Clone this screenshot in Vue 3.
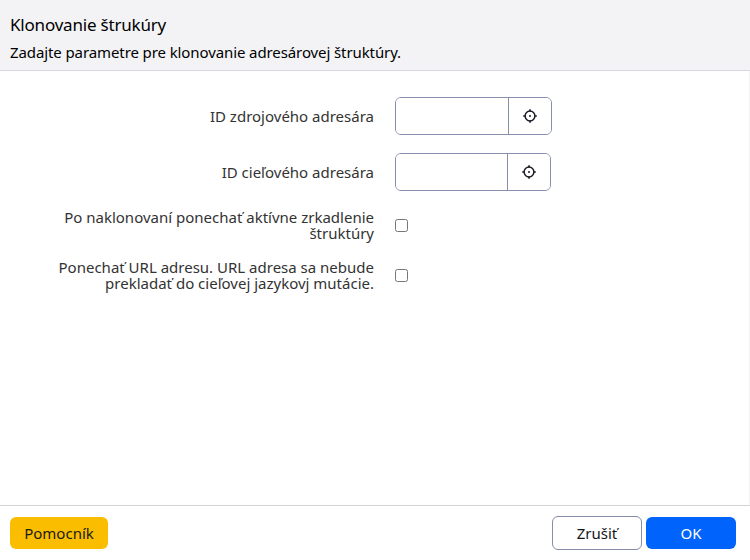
<script setup>
const fields = [
  { label: 'ID zdrojového adresára', cls: 'source' },
  { label: 'ID cieľového adresára', cls: 'target' },
]
const options = [
  { cls: 'mirror', lines: ['Po naklonovaní ponechať aktívne zrkadlenie', 'štruktúry'] },
  { cls: 'url', lines: ['Ponechať URL adresu. URL adresa sa nebude', 'prekladať do cieľovej jazykovj mutácie.'] },
]
</script>

<template>
  <div class="dialog">
    <header class="head">
      <h1><span>Klonovanie štrukúry</span></h1>
      <p><span>Zadajte parametre pre klonovanie adresárovej štruktúry.</span></p>
    </header>
    <main class="body">
      <div v-for="f in fields" :key="f.cls" class="row field" :class="f.cls">
        <label class="label"><span>{{ f.label }}</span></label>
        <div class="group">
          <input type="text" class="input" />
          <button class="pick" type="button">
            <svg width="14" height="14" viewBox="0 0 14 14" fill="none" stroke="#1e1f29">
              <circle cx="7" cy="7" r="4.9" stroke-width="1.5" />
              <path d="M7 .2v2.6M7 11.2v2.6M.2 7h2.6M11.2 7h2.6" stroke-width="1.6" />
              <circle cx="7" cy="7" r="1" fill="#1e1f29" stroke="none" />
            </svg>
          </button>
        </div>
      </div>
      <div v-for="o in options" :key="o.cls" class="row option" :class="o.cls">
        <label class="label"><span v-for="l in o.lines" :key="l" class="line">{{ l }}</span></label>
        <input type="checkbox" class="check" />
      </div>
    </main>
    <footer class="foot">
      <button class="btn help" type="button">Pomocník</button>
      <div class="actions">
        <button class="btn cancel" type="button">Zrušiť</button>
        <button class="btn ok" type="button">OK</button>
      </div>
    </footer>
  </div>
</template>

<style>
body { background: #fff; }
</style>

<style scoped>
* { box-sizing: border-box; }
.dialog {
  display: flex;
  flex-direction: column;
  height: 560px;
  font-family: "Noto Sans", "Open Sans", sans-serif;
  font-size: 15px;
  color: #333;
}
.head {
  height: 71px;
  padding: 13px 10px 0;
  background: #f3f3f6;
  border-bottom: 1px solid #d9d9e2;
  color: #000;
}
h1, p { margin: 0; font-weight: 400; white-space: nowrap; }
h1 { font-size: 17px; line-height: 24px; letter-spacing: -.2px; }
p { margin-top: 3px; line-height: 24px; letter-spacing: -.1px; }
.body {
  flex: 1;
  padding-top: 26px;
  border-right: 1px solid #f3f3f6;
}
.row { display: flex; align-items: center; }
.label {
  width: 374px;
  margin-right: 21px;
  text-align: right;
  line-height: 16px;
  white-space: nowrap;
}
.line { display: block; }
.field { height: 38px; margin-bottom: 18px; }
.group {
  display: flex;
  width: 157px;
  height: 38px;
  border: 1px solid #868ea9;
  border-radius: 6px;
  overflow: hidden;
}
.target .group { width: 156px; }
.input { flex: 1; min-width: 0; padding: 0 12px; border: 0; background: #fff; outline: 0; }
.pick {
  display: flex;
  align-items: center;
  justify-content: center;
  width: 43px;
  padding: 0;
  border: 0;
  border-left: 1px solid #868ea9;
  background: #fff;
}
.option { height: 32px; margin-bottom: 18px; }
.check {
  appearance: none;
  width: 13px;
  height: 13px;
  margin: 0;
  border: 1px solid #767676;
  border-radius: 2.5px;
  background: #fff;
}
.foot {
  display: flex;
  align-items: center;
  justify-content: space-between;
  height: 55px;
  padding: 0 14px 0 10px;
  border-top: 1px solid #d4d4d6;
}
.actions { display: flex; align-items: center; gap: 4px; }
.btn {
  height: 32px;
  padding: 0;
  border: 0;
  border-radius: 6px;
  font: inherit;
  text-align: center;
}
.help { width: 98px; background: #fabd00; color: #1b1b16; }
.cancel { width: 90px; height: 34px; border: 1px solid #868ea9; background: #fff; color: #13151b; }
.ok { width: 90px; background: #0063fb; color: #fff; }
</style>
